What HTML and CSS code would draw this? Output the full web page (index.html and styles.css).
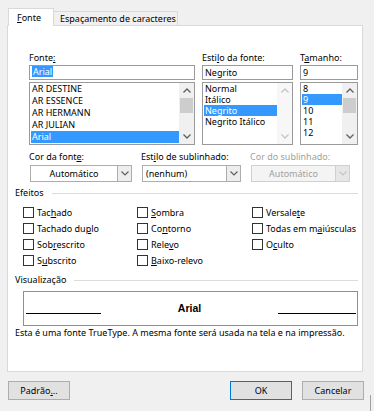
FILE: index.html
```html
<!DOCTYPE html>
<html lang="pt">
<head>
<meta charset="utf-8">
<title>Fonte</title>
<link rel="stylesheet" href="styles.css">
</head>
<body>
<div class="tabs">
  <div class="tab active"><u>F</u>onte</div>
  <div class="tab">Espaçamento de caracteres</div>
</div>
<div class="panel">
  <div class="row1">
    <div class="field">
      <div class="lbl">Fonte<u>:</u></div>
      <div class="input"><span class="sel">Arial</span></div>
      <div class="list l1">
        <div class="items">
          <div class="item">AR DESTINE</div>
          <div class="item">AR ESSENCE</div>
          <div class="item">AR HERMANN</div>
          <div class="item">AR JULIAN</div>
          <div class="item on">Arial</div>
        </div>
        <div class="sb">
          <div class="arr"><svg width="8" height="5" viewBox="0 0 8 5"><polyline points="0.5,4.5 4,1 7.5,4.5" fill="none" stroke="#606060" stroke-width="1.3"/></svg></div>
          <div class="track"><div class="thumb"></div></div>
          <div class="arr"><svg width="8" height="5" viewBox="0 0 8 5"><polyline points="0.5,0.5 4,4 7.5,0.5" fill="none" stroke="#606060" stroke-width="1.3"/></svg></div>
        </div>
      </div>
    </div>
    <div class="field">
      <div class="lbl">Esti<u>l</u>o da fonte:</div>
      <div class="input">Negrito</div>
      <div class="list l2">
        <div class="items">
          <div class="item">Normal</div>
          <div class="item">Itálico</div>
          <div class="item on">Negrito</div>
          <div class="item">Negrito Itálico</div>
        </div>
        <div class="sb dis">
          <div class="arr"><svg width="8" height="5" viewBox="0 0 8 5"><polyline points="0.5,4.5 4,1 7.5,4.5" fill="none" stroke="#c4c4c4" stroke-width="1.3"/></svg></div>
          <div class="track"></div>
          <div class="arr"><svg width="8" height="5" viewBox="0 0 8 5"><polyline points="0.5,0.5 4,4 7.5,0.5" fill="none" stroke="#c4c4c4" stroke-width="1.3"/></svg></div>
        </div>
      </div>
    </div>
    <div class="field">
      <div class="lbl">T<u>a</u>manho:</div>
      <div class="input">9</div>
      <div class="list l2">
        <div class="items">
          <div class="item">8</div>
          <div class="item on">9</div>
          <div class="item">10</div>
          <div class="item">11</div>
          <div class="item">12</div>
        </div>
        <div class="sb">
          <div class="arr"><svg width="8" height="5" viewBox="0 0 8 5"><polyline points="0.5,4.5 4,1 7.5,4.5" fill="none" stroke="#606060" stroke-width="1.3"/></svg></div>
          <div class="track"><div class="thumb"></div></div>
          <div class="arr"><svg width="8" height="5" viewBox="0 0 8 5"><polyline points="0.5,0.5 4,4 7.5,0.5" fill="none" stroke="#606060" stroke-width="1.3"/></svg></div>
        </div>
      </div>
    </div>
  </div>

  <div class="row2">
    <div class="field">
      <div class="lbl">Cor da font<u>e</u>:</div>
      <div class="dd"><span class="dd-val center">Automático</span><span class="dd-btn"><svg width="8" height="5" viewBox="0 0 8 5"><polyline points="0.5,0.5 4,4 7.5,0.5" fill="none" stroke="#606060" stroke-width="1.2"/></svg></span></div>
    </div>
    <div class="field">
      <div class="lbl">Est<u>i</u>lo de sublinhado:</div>
      <div class="dd"><span class="dd-val">(nenhum)</span><span class="dd-btn"><svg width="8" height="5" viewBox="0 0 8 5"><polyline points="0.5,0.5 4,4 7.5,0.5" fill="none" stroke="#606060" stroke-width="1.2"/></svg></span></div>
    </div>
    <div class="field">
      <div class="lbl grey">Cor do sublinhado:</div>
      <div class="dd dis"><span class="dd-val center">Automático</span><span class="dd-btn"><svg width="8" height="5" viewBox="0 0 8 5"><polyline points="0.5,0.5 4,4 7.5,0.5" fill="none" stroke="#c4c4c4" stroke-width="1.2"/></svg></span></div>
    </div>
  </div>

  <div class="group-h"><span>Efeitos</span><i class="rule"></i></div>
  <div class="effects">
    <div class="cb"><span class="box"></span><span>Tac<u>h</u>ado</span></div>
    <div class="cb"><span class="box"></span><span><u>S</u>ombra</span></div>
    <div class="cb"><span class="box"></span><span>Versale<u>t</u>e</span></div>
    <div class="cb"><span class="box"></span><span>Tachado du<u>p</u>lo</span></div>
    <div class="cb"><span class="box"></span><span>Co<u>n</u>torno</span></div>
    <div class="cb"><span class="box"></span><span>Todas em m<u>a</u>iúsculas</span></div>
    <div class="cb"><span class="box"></span><span>Sob<u>r</u>escrito</span></div>
    <div class="cb"><span class="box"></span><span>Rele<u>v</u>o</span></div>
    <div class="cb"><span class="box"></span><span>O<u>c</u>ulto</span></div>
    <div class="cb"><span class="box"></span><span>S<u>u</u>bscrito</span></div>
    <div class="cb"><span class="box"></span><span><u>B</u>aixo-relevo</span></div>
  </div>

  <div class="group-h g2"><span>Visualização</span><i class="rule"></i></div>
  <div class="preview">
    <i class="pline left"></i>
    <span class="ptext">Arial</span>
    <i class="pline right"></i>
  </div>
  <div class="desc">Esta é uma fonte TrueType. A mesma fonte será usada na tela e na impressão.</div>
</div>

<div class="buttons">
  <div class="btn">Padrão<u>.</u>..</div>
  <div class="spacer"></div>
  <div class="btn ok">OK</div>
  <div class="btn">Cancelar</div>
  <i class="grip"></i>
</div>
</body>
</html>
```

FILE: styles.css
```css
* { box-sizing: border-box; }
html, body { margin: 0; padding: 0; }
body {
  width: 374px;
  height: 411px;
  overflow: hidden;
  background: #f0f0f0;
  font-family: "Noto Sans", "Open Sans", sans-serif;
  font-size: 9px;
  color: #000;
}
u { text-decoration: underline; text-underline-offset: 1px; }

.tabs {
  display: flex;
  align-items: flex-end;
  padding: 8px 0 0 8px;
}
.tab {
  height: 14px;
  line-height: 13px;
  padding: 0 6px;
  border: 1px solid #d9d9d9;
  border-bottom: none;
  border-left: none;
  background: #f0f0f0;
  white-space: nowrap;
  width: 124px;
}
.tab.active {
  height: 18px;
  line-height: 17px;
  width: 46px;
  padding-left: 8px;
  margin-bottom: -1px;
  border-left: 1px solid #d9d9d9;
  background: #fff;
  position: relative;
}

.panel {
  margin-left: 7px;
  width: 356px;
  height: 347px;
  border: 1px solid #d9d9d9;
  background: #fff;
  padding-top: 25px;
}

.lbl { line-height: 14px; height: 14px; white-space: nowrap; }
.lbl.grey { color: #a0a0a0; }

.row1 {
  display: grid;
  grid-template-columns: 166px 91px 58px;
  column-gap: 7px;
  margin-left: 21px;
}
.input {
  height: 15px;
  border: 1px solid #9a9a9a;
  padding-left: 2px;
  line-height: 13px;
}
.sel { display: inline-block; background: #3399ff; color: #fff; line-height: 11px; padding: 0 1px; vertical-align: 1px; }
.list {
  margin-top: 2px;
  height: 63px;
  border: 1px solid #9a9a9a;
  display: flex;
}
.items { flex: 1; padding: 0 0 0 1px; }
.l1 .item { height: 12px; line-height: 12px; padding-left: 1px; }
.l2 .item { height: 11px; line-height: 11px; padding-left: 1px; }
.item.on { background: #3399ff; color: #fff; }
.sb {
  width: 15px;
  display: flex;
  flex-direction: column;
  background: #f0f0f0;
}
.sb.dis { background: #f7f7f7; }
.arr {
  height: 15px;
  display: flex;
  align-items: center;
  justify-content: center;
}
.track { flex: 1; }
.thumb { height: 15px; background: #cdcdcd; margin: 0 1px; }

.row2 {
  display: grid;
  grid-template-columns: 103px 100px 100px;
  column-gap: 9px;
  margin: 5px 0 0 21px;
}
.row2 .lbl { margin-bottom: 1px; }
.dd {
  height: 17px;
  border: 1px solid #adadad;
  display: flex;
  background: #fff;
  margin-left: 1px;
}
.dd-val { flex: 1; line-height: 15px; padding-left: 3px; }
.dd-val.center { text-align: center; padding-left: 0; }
.dd-btn {
  width: 14px;
  border-left: 1px solid #adadad;
  background: #ededed;
  display: flex;
  align-items: center;
  justify-content: center;
}
.dd.dis { border-color: #d0d0d0; background: #f4f4f4; color: #a0a0a0; }
.dd.dis .dd-btn { border-left-color: #d0d0d0; background: #e6e6e6; }

.group-h {
  display: flex;
  align-items: center;
  margin: 4px 4px 0 7px;
  line-height: 14px;
  height: 14px;
}
.group-h .rule { flex: 1; height: 1px; background: #dcdcdc; margin-left: 8px; }
.group-h.g2 { margin-top: 5px; }

.effects {
  display: grid;
  grid-template-columns: 114px 115px 1fr;
  grid-auto-rows: 16px;
  margin: 4px 0 0 15px;
}
.cb { display: flex; align-items: center; white-space: nowrap; }
.box {
  width: 11px;
  height: 11px;
  border: 1px solid #333;
  background: #fff;
  margin-right: 3px;
  flex: none;
}

.preview {
  margin: 4px 0 0 15px;
  width: 335px;
  height: 35px;
  border: 1px solid #8f8f8f;
  display: flex;
  justify-content: space-between;
  padding: 0 1px 0 2px;
}
.pline { display: block; height: 1px; background: #000; margin-top: 21px; }
.pline.left { width: 75px; }
.pline.right { width: 78px; }
.ptext { font-family: "Liberation Sans", Arial, sans-serif; font-weight: bold; font-size: 10.5px; line-height: 33px; }
.desc { margin-left: 7px; line-height: 14px; white-space: nowrap; }

.buttons {
  display: flex;
  margin-top: 9px;
  padding-left: 8px;
  height: 30px;
}
.btn {
  width: 62px;
  height: 19px;
  border: 1px solid #adadad;
  background: #e1e1e1;
  text-align: center;
  line-height: 17px;
}
.btn.ok { border-color: #0078d7; margin-right: 10px; }
.spacer { flex: 1; }
.grip { display: block; width: 1px; height: 16px; background: #a0a0a0; align-self: flex-end; margin: 0 3px 0 6px; }
```
